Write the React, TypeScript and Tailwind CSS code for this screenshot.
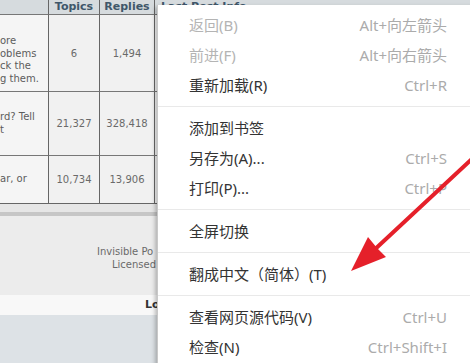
import { Fragment } from "react";

type Item = { label: string; shortcut?: string; disabled?: boolean } | "sep";

const menuItems: Item[] = [
  { label: "返回(B)", shortcut: "Alt+向左箭头", disabled: true },
  { label: "前进(F)", shortcut: "Alt+向右箭头", disabled: true },
  { label: "重新加载(R)", shortcut: "Ctrl+R" },
  "sep",
  { label: "添加到书签" },
  { label: "另存为(A)...", shortcut: "Ctrl+S" },
  { label: "打印(P)...", shortcut: "Ctrl+P" },
  "sep",
  { label: "全屏切换" },
  "sep",
  { label: "翻成中文（简体）(T)" },
  "sep",
  { label: "查看网页源代码(V)", shortcut: "Ctrl+U" },
  { label: "检查(N)", shortcut: "Ctrl+Shift+I" },
];

const rows = [
  { lines: ["ore", "oblems", "ck the", "g them."], topics: "6", replies: "1,494", h: "h-[77px]", pad: "pt-[20px]" },
  { lines: ["rd? Tell", "t"], topics: "21,327", replies: "328,418", h: "h-[64px]", pad: "pt-[19px]" },
  { lines: ["ar, or"], topics: "10,734", replies: "13,906", h: "h-[47px]", pad: "pt-[17px]" },
];

function ContextMenu() {
  return (
    <div className="absolute left-[157px] top-[5px] w-[320px] bg-white py-[5px] shadow-[-2px_2px_4px_rgba(0,0,0,0.25)] border-l border-[#c8c8c8] font-['Noto_Sans','Noto_Sans_CJK_SC',sans-serif] text-[15px]">
      {menuItems.map((item, i) =>
        item === "sep" ? (
          <div key={i} className="h-[13px] flex items-center">
            <div className="h-px w-full bg-[#e9e9e9]" />
          </div>
        ) : (
          <div key={i} className="h-[30px] flex items-center justify-between pl-[31px] pr-[30px]">
            <span className={item.disabled ? "text-[#b4b4b4]" : "text-[#333]"}>{item.label}</span>
            {item.shortcut && <span className="text-[#ababab]">{item.shortcut}</span>}
          </div>
        )
      )}
    </div>
  );
}

function RedArrow() {
  return (
    <svg className="absolute left-0 top-0 pointer-events-none" width="470" height="363" viewBox="0 0 470 363">
      <line x1="474" y1="157" x2="372" y2="252" stroke="#e5202a" strokeWidth="4" strokeLinecap="round" />
      <polygon points="351,271 368,237 377,248 386,257" fill="#e5202a" />
    </svg>
  );
}

export default function App() {
  return (
    <div className="relative w-[470px] h-[363px] overflow-hidden bg-[#ececec] font-['DejaVu_Sans',sans-serif]">
      {/* forum table */}
      <div className="grid grid-cols-[49px_51px_55px_1fr] bg-[#f5f5f5] border-b border-[#666]">
        <div className="h-[15px] bg-[#d6dbde] border-b border-[#777] border-r border-r-[#666]" />
        <div className="h-[15px] bg-[#d6dbde] border-b border-[#777] border-r border-r-[#666] flex items-center justify-center text-[11px] font-bold text-[#40576a]">Topics</div>
        <div className="h-[15px] bg-[#d6dbde] border-b border-[#777] border-r border-r-[#666] flex items-center justify-center text-[11px] font-bold text-[#40576a]">Replies</div>
        <div className="h-[15px] bg-[#d6dbde] border-b border-[#777] pl-[6px] text-[11px] font-bold text-[#40576a] leading-[14px]">Last Post Info</div>
        {rows.map((r, i) => (
          <Fragment key={i}>
            <div className={`${r.h} ${r.pad} ${i < 2 ? "border-b border-[#777]" : ""} border-r border-r-[#666] text-[10px] leading-[12.7px] text-[#5c5c5c] whitespace-nowrap overflow-hidden`}>
              {r.lines.map((l, j) => (
                <div key={j}>{l}</div>
              ))}
            </div>
            <div className={`${r.h} ${i < 2 ? "border-b border-[#777]" : ""} border-r border-r-[#666] bg-[#f1f1f1] flex items-center justify-center text-[10px] text-[#6a6a6a]`}>{r.topics}</div>
            <div className={`${r.h} ${i < 2 ? "border-b border-[#777]" : ""} border-r border-r-[#666] bg-[#f1f1f1] flex items-center justify-center text-[10px] text-[#6a6a6a]`}>{r.replies}</div>
            <div className={`${r.h} ${i < 2 ? "border-b border-[#777]" : ""}`} />
          </Fragment>
        ))}
      </div>
      <div className="h-[8px] bg-[#e6e6e6]" />
      <div className="h-[4px] bg-[#c6c6c6]" />

      {/* footer, the part left of the menu */}
      <div className="h-[79px] w-[157px] overflow-hidden pt-[29px] text-[10px] leading-[13px] text-[#6a6a6a] whitespace-nowrap">
        <div className="pl-[97px]">Invisible Po</div>
        <div className="pl-[112px]">Licensed</div>
      </div>
      <div className="h-[20px] bg-[#f8f8f8]">
        <div className="w-[157px] h-full overflow-hidden pl-[145px] flex items-center text-[11px] font-bold text-[#333] whitespace-nowrap">Lo</div>
      </div>
      <div className="h-[48px] bg-[#dde2e6]" />

      <ContextMenu />
      <RedArrow />
    </div>
  );
}
